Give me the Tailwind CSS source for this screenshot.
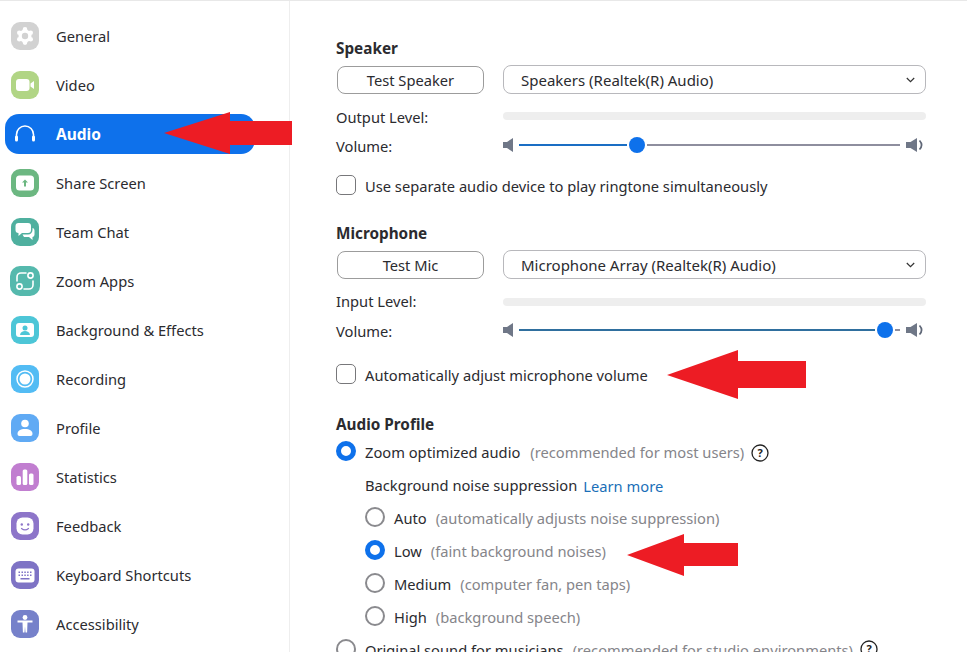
<!DOCTYPE html>
<html>
<head>
<meta charset="utf-8">
<script src="https://cdn.jsdelivr.net/npm/@tailwindcss/browser@4"></script>
</head>
<body class="bg-white">
<div class="relative w-[967px] h-[652px] overflow-hidden flex bg-white border-t border-[#e8e8e8] text-[14.7px] leading-5 text-[#2b2b2f] font-['Noto_Sans',sans-serif]">
  <aside class="w-[290px] shrink-0 h-full border-r border-[#eeeeee] pt-[15px] pl-[5px] flex flex-col gap-[9px]">
    <div class="w-[250px] h-10 shrink-0 flex items-center gap-[17px] pl-[6px]">
      <svg width="28" height="28" viewBox="0 0 28 28"><rect width="28" height="28" rx="9" fill="#d2d2d2"/><g fill="#fff"><circle cx="14" cy="14" r="6.500"/><circle cx="14" cy="7.400" r="2.300"/><circle cx="19.700" cy="10.700" r="2.300"/><circle cx="19.700" cy="17.300" r="2.300"/><circle cx="14" cy="20.600" r="2.300"/><circle cx="8.300" cy="17.300" r="2.300"/><circle cx="8.300" cy="10.700" r="2.300"/></g><circle cx="14" cy="14" r="3.200" fill="#d2d2d2"/></svg>
      <span>General</span>
    </div>
    <div class="w-[250px] h-10 shrink-0 flex items-center gap-[17px] pl-[6px]">
      <svg width="28" height="28" viewBox="0 0 28 28"><rect width="28" height="28" rx="9" fill="#b1d585"/><rect x="5" y="8" width="13.500" height="12" rx="3" fill="#fff"/><path d="M19.500 12.500l3.500-2.500v8l-3.500-2.500z" fill="#fff"/></svg>
      <span>Video</span>
    </div>
    <div class="w-[250px] h-10 shrink-0 flex items-center gap-[17px] pl-[6px] rounded-[14px] bg-[#0e71eb] text-white font-bold text-[15.500px]">
      <svg width="28" height="28" viewBox="0 0 28 28" fill="none"><path d="M5.500 19v-4.500a8.500 8.500 0 0 1 17 0V19" stroke="#fff" stroke-width="1.600"/><rect x="4" y="15.500" width="3" height="6" rx="1.500" fill="#fff"/><rect x="21" y="15.500" width="3" height="6" rx="1.500" fill="#fff"/></svg>
      <span>Audio</span>
    </div>
    <div class="w-[250px] h-10 shrink-0 flex items-center gap-[17px] pl-[6px]">
      <svg width="28" height="28" viewBox="0 0 28 28"><rect width="28" height="28" rx="9" fill="#6cb781"/><rect x="5" y="6.500" width="18" height="15" rx="3.500" fill="#fff"/><path d="M14 10.500l3 3h-2v4h-2v-4h-2z" fill="#6cb781"/></svg>
      <span>Share Screen</span>
    </div>
    <div class="w-[250px] h-10 shrink-0 flex items-center gap-[17px] pl-[6px]">
      <svg width="28" height="28" viewBox="0 0 28 28"><rect width="28" height="28" rx="9" fill="#4fb09f"/><path d="M7.500 5h9.500a3 3 0 0 1 3 3v4a3 3 0 0 1-3 3h-6l-3.500 3v-3a3 3 0 0 1-3-3V8a3 3 0 0 1 3-3z" fill="#fff"/><path d="M21.500 10a2.500 2.500 0 0 1 2 2.500v4a2.500 2.500 0 0 1-2 2.500v3l-3.500-3h-5l-1.500-2.500h5.500a4.500 4.500 0 0 0 4.500-4.500z" fill="#fff"/></svg>
      <span>Team Chat</span>
    </div>
    <div class="w-[250px] h-10 shrink-0 flex items-center gap-[17px] pl-[6px]">
      <svg width="30" height="30" class="-ml-px -mr-px" viewBox="0 0 30 30" fill="none"><rect width="30" height="30" rx="10" fill="#55b9ad"/><path d="M7 15v-4a4 4 0 0 1 4-4h5M23 15v4a4 4 0 0 1-4 4h-5" stroke="#fff" stroke-width="1.600" stroke-linecap="round"/><circle cx="20.500" cy="9.500" r="2.600" stroke="#fff" stroke-width="1.600"/><circle cx="9.500" cy="20.500" r="2.600" stroke="#fff" stroke-width="1.600"/></svg>
      <span>Zoom Apps</span>
    </div>
    <div class="w-[250px] h-10 shrink-0 flex items-center gap-[17px] pl-[6px]">
      <svg width="28" height="28" viewBox="0 0 28 28"><rect width="28" height="28" rx="9" fill="#4dc6d7"/><rect x="5" y="7" width="18" height="14" rx="3" fill="#fff"/><circle cx="14" cy="12" r="2.500" fill="#4dc6d7"/><path d="M9 19c.5-3 2.500-4 5-4s4.500 1 5 4z" fill="#4dc6d7"/></svg>
      <span>Background &amp; Effects</span>
    </div>
    <div class="w-[250px] h-10 shrink-0 flex items-center gap-[17px] pl-[6px]">
      <svg width="28" height="28" viewBox="0 0 28 28" fill="none"><rect width="28" height="28" rx="9" fill="#53bcf4"/><circle cx="14" cy="14" r="8" stroke="#fff" stroke-width="1.500"/><circle cx="14" cy="14" r="5.500" fill="#fff"/></svg>
      <span>Recording</span>
    </div>
    <div class="w-[250px] h-10 shrink-0 flex items-center gap-[17px] pl-[6px]">
      <svg width="28" height="28" viewBox="0 0 28 28"><rect width="28" height="28" rx="9" fill="#60aaf4"/><circle cx="14" cy="9.500" r="3.800" fill="#fff"/><path d="M6.500 20c0-3.500 3-5 7.500-5s7.500 1.500 7.500 5a2 2 0 0 1-2 2h-11a2 2 0 0 1-2-2z" fill="#fff"/></svg>
      <span>Profile</span>
    </div>
    <div class="w-[250px] h-10 shrink-0 flex items-center gap-[17px] pl-[6px]">
      <svg width="28" height="28" viewBox="0 0 28 28"><rect width="28" height="28" rx="9" fill="#c17ed0"/><rect x="5.500" y="13" width="4.500" height="9" rx="1.500" fill="#fff"/><rect x="11.700" y="6.500" width="4.600" height="15.500" rx="1.500" fill="#fff"/><rect x="18" y="10.500" width="4.500" height="11.500" rx="1.500" fill="#fff"/></svg>
      <span>Statistics</span>
    </div>
    <div class="w-[250px] h-10 shrink-0 flex items-center gap-[17px] pl-[6px]">
      <svg width="28" height="28" viewBox="0 0 28 28" fill="none"><rect width="28" height="28" rx="9" fill="#8d75c9"/><rect x="5.500" y="5.500" width="17" height="17" rx="6" fill="#fff"/><circle cx="10.800" cy="12.500" r="1.200" fill="#8d75c9"/><circle cx="17.200" cy="12.500" r="1.200" fill="#8d75c9"/><path d="M10.500 16.500c2 1.600 5 1.600 7 0" stroke="#8d75c9" stroke-width="1.200" stroke-linecap="round"/></svg>
      <span>Feedback</span>
    </div>
    <div class="w-[250px] h-10 shrink-0 flex items-center gap-[17px] pl-[6px]">
      <svg width="28" height="28" viewBox="0 0 28 28"><rect width="28" height="28" rx="9" fill="#7e73c5"/><rect x="4.500" y="7.500" width="19" height="14" rx="3" fill="#fff"/><path d="M7.500 10.500h1.500v1.500h-1.500zM10.500 10.500h1.500v1.500h-1.500zM13.300 10.500h1.500v1.500h-1.500zM16.100 10.500h1.500v1.500h-1.500zM19 10.500h1.500v1.500h-1.500zM7.500 13.500h1.500v1.500h-1.500zM10.500 13.500h1.500v1.500h-1.500zM13.300 13.500h1.500v1.500h-1.500zM16.100 13.500h1.500v1.500h-1.500zM19 13.500h1.500v1.500h-1.500zM9.500 17h9v1.500h-9z" fill="#7e73c5"/></svg>
      <span>Keyboard Shortcuts</span>
    </div>
    <div class="w-[250px] h-10 shrink-0 flex items-center gap-[17px] pl-[6px]">
      <svg width="28" height="28" viewBox="0 0 28 28"><rect width="28" height="28" rx="9" fill="#7681ca"/><circle cx="14" cy="7.500" r="2.400" fill="#fff"/><path d="M6.500 10.500h15v2h-5l-.4 10h-1.600l-.5-6-.5 6h-1.600l-.4-10h-5z" fill="#fff"/></svg>
      <span>Accessibility</span>
    </div>
  </aside>

  <main class="flex-1 pl-[46px] pr-[41px] pt-[37px]">
    <h2 class="font-bold h-5 text-[15.300px]">Speaker</h2>
    <div class="mt-[7px] h-[29px] flex items-center">
      <button class="ml-px w-[147px] h-7 mt-px border border-[#9c9c9c] rounded-lg text-center shrink-0">Test Speaker</button>
      <div class="ml-[19px] w-[423px] h-[29px] border border-[#b8b8bc] rounded-lg flex items-center justify-between pl-[17px] pr-[10px] text-[15px]">
        <span>Speakers (Realtek(R) Audio)</span>
        <svg width="9" height="6" viewBox="0 0 9 6" fill="none"><path d="M.8 1l3.700 3.700L8.200 1" stroke="#333" stroke-width="1.200"/></svg>
      </div>
    </div>
    <div class="mt-[13px] h-5 flex items-center">
      <span class="w-[167px] shrink-0">Output Level:</span>
      <div class="w-[423px] h-2 rounded bg-[#eeeeee] -mt-[2px]"></div>
    </div>
    <div class="mt-2 h-5 flex items-center">
      <span class="w-[167px] shrink-0 mt-[2px]">Volume:</span>
      <div class="w-[423px] flex items-center">
        <svg class="shrink-0" width="10" height="14" viewBox="0 0 10 14"><path d="M0 4h4l6-4v14l-6-4H0z" fill="#6f7787"/></svg>
        <div class="ml-[6px] w-[108px] h-[2px] bg-[#1a6ec4]"></div>
        <div class="ml-[2px] w-4 h-4 rounded-full bg-[#0e71eb] shrink-0"></div>
        <div class="ml-[2px] w-[253px] h-[2px] bg-[#8e8e9e]"></div>
        <svg class="ml-[6px] shrink-0" width="18" height="14" viewBox="0 0 18 14" fill="none"><path d="M0 4h4.500l6.500-4v14l-6.500-4H0z" fill="#6f7787"/><path d="M13.500 2.500c2.600 2.800 2.600 6.200 0 9" stroke="#5f6777" stroke-width="1.700"/></svg>
      </div>
    </div>
    <div class="mt-5 h-5 flex items-center gap-[9px]">
      <span class="w-5 h-5 rounded-[5px] border border-[#77777a] shrink-0"></span>
      <span class="pt-[2px]">Use separate audio device to play ringtone simultaneously</span>
    </div>

    <h2 class="mt-7 font-bold h-5 text-[15.300px]">Microphone</h2>
    <div class="mt-[7px] h-[29px] flex items-center">
      <button class="ml-px w-[147px] h-7 mt-px border border-[#9c9c9c] rounded-lg text-center shrink-0">Test Mic</button>
      <div class="ml-[19px] w-[423px] h-[29px] border border-[#b8b8bc] rounded-lg flex items-center justify-between pl-[17px] pr-[10px] text-[15px]">
        <span>Microphone Array (Realtek(R) Audio)</span>
        <svg width="9" height="6" viewBox="0 0 9 6" fill="none"><path d="M.8 1l3.700 3.700L8.200 1" stroke="#333" stroke-width="1.200"/></svg>
      </div>
    </div>
    <div class="mt-[12px] h-5 flex items-center">
      <span class="w-[167px] shrink-0">Input Level:</span>
      <div class="w-[423px] h-2 rounded bg-[#eeeeee] mt-[1px]"></div>
    </div>
    <div class="mt-[9px] h-5 flex items-center">
      <span class="w-[167px] shrink-0 mt-[2px]">Volume:</span>
      <div class="w-[423px] flex items-center">
        <svg class="shrink-0" width="10" height="14" viewBox="0 0 10 14"><path d="M0 4h4l6-4v14l-6-4H0z" fill="#6f7787"/></svg>
        <div class="ml-[6px] w-[356px] h-[2px] bg-[#2f6f9e]"></div>
        <div class="ml-[2px] w-4 h-4 rounded-full bg-[#0e71eb] shrink-0"></div>
        <div class="ml-[2px] w-[5px] h-[2px] bg-[#8e8e9e]"></div>
        <svg class="ml-[6px] shrink-0" width="18" height="14" viewBox="0 0 18 14" fill="none"><path d="M0 4h4.500l6.500-4v14l-6.500-4H0z" fill="#6f7787"/><path d="M13.500 2.500c2.600 2.800 2.600 6.200 0 9" stroke="#5f6777" stroke-width="1.700"/></svg>
      </div>
    </div>
    <div class="mt-6 h-5 flex items-center gap-[9px]">
      <span class="w-5 h-5 rounded-[5px] border border-[#77777a] shrink-0"></span>
      <span class="pt-[2px]">Automatically adjust microphone volume</span>
    </div>

    <h2 class="mt-[30px] font-bold h-5 text-[15.300px]">Audio Profile</h2>
    <div class="mt-[7px] h-5 flex items-center gap-[9px]">
      <span class="w-5 h-5 rounded-full border-[5px] border-[#0e71eb] bg-white shrink-0"></span>
      <span class="pt-[2px]">Zoom optimized audio</span>
      <span class="pt-[2px] ml-[1px] text-[#85858a]">(recommended for most users)</span>
      <svg class="shrink-0 -ml-[2px] mt-[4px]" width="18" height="18" viewBox="0 0 18 18" fill="none"><circle cx="9" cy="9" r="8" stroke="#222" stroke-width="1.300"/><text x="9" y="13" text-anchor="middle" font-size="11" font-weight="700" fill="#222" font-family="Noto Sans">?</text></svg>
    </div>
    <div class="mt-[13px] h-5 ml-[29px] flex items-center gap-[6px]">
      <span class="pt-[2px]">Background noise suppression</span>
      <span class="text-[#1a6fb8] pt-[4px]">Learn more</span>
    </div>
    <div class="mt-[13px] h-5 ml-[29px] flex items-center gap-[9px]">
      <span class="w-5 h-5 rounded-full border-2 border-[#8a8a8e] shrink-0"></span>
      <span class="pt-[2px]">Auto</span>
      <span class="pt-[2px] text-[#85858a]">(automatically adjusts noise suppression)</span>
    </div>
    <div class="mt-[13px] h-5 ml-[29px] flex items-center gap-[9px]">
      <span class="w-5 h-5 rounded-full border-[5px] border-[#0e71eb] bg-white shrink-0"></span>
      <span class="pt-[2px]">Low</span>
      <span class="pt-[2px] text-[#85858a]">(faint background noises)</span>
    </div>
    <div class="mt-[13px] h-5 ml-[29px] flex items-center gap-[9px]">
      <span class="w-5 h-5 rounded-full border-2 border-[#8a8a8e] shrink-0"></span>
      <span class="pt-[2px]">Medium</span>
      <span class="pt-[2px] text-[#85858a]">(computer fan, pen taps)</span>
    </div>
    <div class="mt-[13px] h-5 ml-[29px] flex items-center gap-[9px]">
      <span class="w-5 h-5 rounded-full border-2 border-[#8a8a8e] shrink-0"></span>
      <span class="pt-[2px]">High</span>
      <span class="pt-[2px] text-[#85858a]">(background speech)</span>
    </div>
    <div class="mt-[13px] h-5 flex items-center gap-[9px] whitespace-nowrap">
      <span class="w-5 h-5 rounded-full border-2 border-[#8a8a8e] shrink-0"></span>
      <span class="pt-[2px]">Original sound for musicians</span>
      <span class="pt-[2px] text-[#85858a]">(recommended for studio environments)</span>
      <svg class="shrink-0 -ml-[2px]" width="18" height="18" viewBox="0 0 18 18" fill="none"><circle cx="9" cy="9" r="8" stroke="#222" stroke-width="1.300"/><text x="9" y="13" text-anchor="middle" font-size="11" font-weight="700" fill="#222" font-family="Noto Sans">?</text></svg>
    </div>
  </main>

  <svg class="absolute left-0 top-[-1px] pointer-events-none" width="967" height="652" viewBox="0 0 967 652">
    <path d="M164 133L230 112V121H292V145H230V154Z" fill="#ed1c24"/>
    <path d="M667 375L738 350V361H806V388H738V399Z" fill="#ed1c24"/>
    <path d="M627 555L684 534V543H738V566H684V576Z" fill="#ed1c24"/>
  </svg>
</div>
</body>
</html>
